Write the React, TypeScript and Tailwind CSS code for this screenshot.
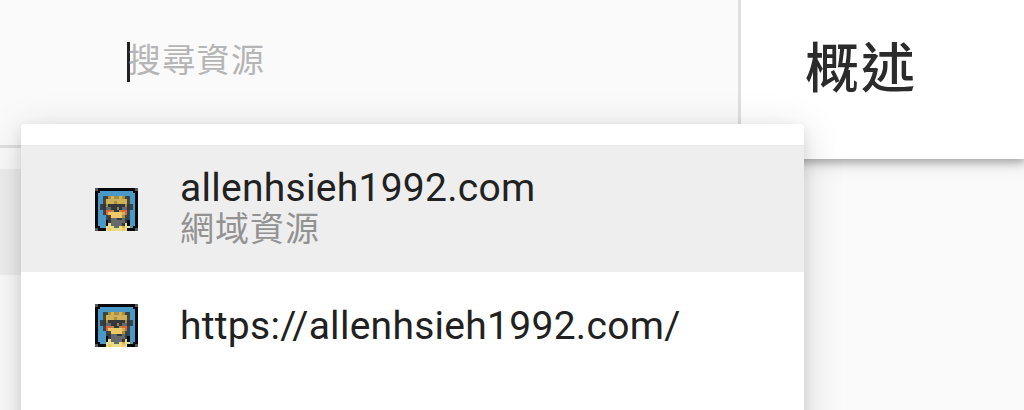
const palette: Record<string, string> = {
  k: '#07090d',
  s: '#54585a',
  b: '#4a98c6',
  d: '#34383b',
  o: '#4a452c',
  y: '#cfb158',
  t: '#a68e45',
  g: '#66696c',
  m: '#898374',
  l: '#ecc866',
  r: '#de6540',
  c: '#eadb85',
  n: '#2f4652',
};

const avatarRows = [
  'skkkkkkkkkkkkkks',
  'kkbbbbbbbbbbbbkk',
  'kbbbbbbbbbbbbbbk',
  'kbbnotyttytonbbk',
  'kbboyyyyyyyyobbk',
  'kbboyyytyyyyobbk',
  'kbndtddddddtdnbk',
  'kbndggddmdggdnbk',
  'kbborrtddtrrobbk',
  'kbbnrlllllyrnbbk',
  'kbbbnolllltonbbk',
  'kbbbndggddgnnbbk',
  'kbbbkdgggggdkbbk',
  'kbbbkcggggdckbbk',
  'kkbbcccggcyccbkk',
  'skkkclcccclckkks',
];

function Avatar() {
  return (
    <svg viewBox="0 0 16 16" className="size-[43px] shrink-0" aria-hidden="true" shapeRendering="crispEdges">
      {avatarRows.flatMap((row, y) =>
        row.split('').map((cell, x) => (
          <rect key={`${x}-${y}`} x={x} y={y} width="1" height="1" fill={palette[cell]} />
        )),
      )}
    </svg>
  );
}

function Sidebar() {
  return (
    <aside className="flex w-[741px] shrink-0 flex-col bg-[#fafafa]">
      <div className="h-[148px] border-r-[3px] border-b-[3px] border-[#e0e0e0] pt-[42px] pl-[127px]">
        <div className="flex h-10 items-center border-l-[3px] border-[#212121]">
          <span className="-ml-[2px] text-[33px] leading-10 tracking-[1.3px] text-[#b5b5b5] -translate-y-[1px]">搜尋資源</span>
        </div>
      </div>
      <div className="mt-[21px] h-[106px] bg-[#eeeeee]" />
    </aside>
  );
}

function Suggestions() {
  return (
    <ul className="absolute top-[124px] left-[21px] h-[420px] w-[783px] rounded-[4px] bg-white pt-[21px] text-[#212121] shadow-[0_5px_14px_rgba(0,0,0,0.1),0_8px_40px_rgba(0,0,0,0.15)]">
      <li className="flex h-[127px] items-center border-t border-[#e8e8e8] bg-[#eeeeee] pl-[74px]">
        <Avatar />
        <div className="ml-[42px]">
          <div className="-translate-y-px text-[39px] leading-[42px] tracking-[0.28px]">allenhsieh1992.com</div>
          <div className="text-[34px] leading-[40px] tracking-[1px] text-[#929292] -translate-y-px">網域資源</div>
        </div>
      </li>
      <li className="flex h-[107px] items-center pl-[74px]">
        <Avatar />
        <div className="ml-[42px] text-[39px] leading-[42px] tracking-[0.28px]">https://allenhsieh1992.com/</div>
      </li>
    </ul>
  );
}

export default function App() {
  return (
    <div className="relative flex h-[410px] w-[1024px] overflow-hidden bg-[#fafafa] font-['Roboto','Noto_Sans_CJK_TC',sans-serif]">
      <Sidebar />
      <main className="flex-1">
        <header className="h-[159px] bg-white pt-[40px] pl-[64px] shadow-[0_3px_20px_4px_rgba(0,0,0,0.08),0_3px_8px_1px_rgba(0,0,0,0.28)] [clip-path:inset(0_0_-30px_0)]">
          <h1 className="text-[54px] leading-[60px] font-medium tracking-[2px] text-[#2b2b2b]">概述</h1>
        </header>
      </main>
      <Suggestions />
    </div>
  );
}
